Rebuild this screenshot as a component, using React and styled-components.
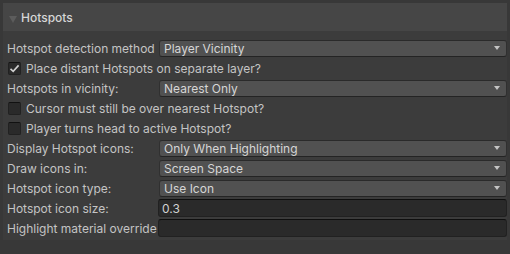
import React from "react";
import styled, { createGlobalStyle } from "styled-components";

const Global = createGlobalStyle`
  html, body { margin: 0; padding: 0; background: #383838; }
  body { font-family: Inter, "Noto Sans", sans-serif; font-size: 12px; color: #c4c4c4; }
  * { box-sizing: border-box; }
`;

const Page = styled.div`
  width: 510px;
  height: 254px;
  padding: 3px 3px 0 3px;
  background: #383838;
`;

const Header = styled.div`
  height: 28px;
  display: flex;
  align-items: center;
  gap: 4px;
  padding-left: 6px;
  background: #464646;
  color: #d6d6d6;
  font-size: 12px;
  font-weight: 500;
`;

const Foldout = styled.span`
  width: 0;
  height: 0;
  margin-top: 5px;
  border-left: 4px solid transparent;
  border-right: 4px solid transparent;
  border-top: 7px solid #5c5c5c;
`;

const Panel = styled.div`
  background: #3c3c3c;
  padding: 7px 0 2px 4px;
  display: flex;
  flex-direction: column;
`;

const Row = styled.div`
  height: 20px;
  display: flex;
  align-items: center;
`;

const Label = styled.div`
  width: 152px;
  flex: none;
  white-space: nowrap;
  overflow: hidden;
  color: #c4c4c4;
`;

const Dropdown = styled.div`
  flex: 1;
  height: 17px;
  display: flex;
  align-items: center;
  justify-content: space-between;
  padding: 0 6px 0 4px;
  background: #515151;
  border: 1px solid #303030;
  border-top-color: #2a2a2a;
  border-bottom-color: #242424;
  border-radius: 3px;
  color: #d6d6d6;
`;

const Arrow = styled.span`
  width: 0;
  height: 0;
  border-left: 3.5px solid transparent;
  border-right: 3.5px solid transparent;
  border-top: 4px solid #c4c4c4;
`;

const Field = styled.div`
  flex: 1;
  height: 18px;
  margin-left: -1px;
  display: flex;
  align-items: center;
  padding: 0 3px;
  background: #2a2a2a;
  border: 1px solid #212121;
  border-top-color: #0f0f0f;
  border-radius: 3px;
  color: #d2d2d2;
`;

const CheckRow = styled(Row)`
  gap: 5px;
`;

const Box = styled.span`
  width: 13px;
  height: 13px;
  margin-left: 1px;
  margin-top: 1px;
  border-radius: 2px;
  background: #2a2a2a;
  border: 1px solid #212121;
  border-top-color: #111;
  display: flex;
  align-items: center;
  justify-content: center;
`;

const Check = () => (
  <svg width="11" height="11" viewBox="0 0 11 11">
    <path d="M1.5 5.8 L4.2 8.4 L9.6 2.4" fill="none" stroke="#d0d0d0" strokeWidth="1.6" />
  </svg>
);

const Select = ({ label, value }) => (
  <Row>
    <Label>{label}</Label>
    <Dropdown>
      <span>{value}</span>
      <Arrow />
    </Dropdown>
  </Row>
);

const Toggle = ({ label, checked }) => (
  <CheckRow>
    <Box>{checked && <Check />}</Box>
    <span>{label}</span>
  </CheckRow>
);

const Input = ({ label, value }) => (
  <Row>
    <Label>{label}</Label>
    <Field>{value}</Field>
  </Row>
);

export default function App() {
  return (
    <Page>
      <Global />
      <Header>
        <Foldout />
        <span>Hotspots</span>
      </Header>
      <Panel>
        <Select label="Hotspot detection method" value="Player Vicinity" />
        <Toggle label="Place distant Hotspots on separate layer?" checked />
        <Select label="Hotspots in vicinity:" value="Nearest Only" />
        <Toggle label="Cursor must still be over nearest Hotspot?" />
        <Toggle label="Player turns head to active Hotspot?" />
        <Select label="Display Hotspot icons:" value="Only When Highlighting" />
        <Select label="Draw icons in:" value="Screen Space" />
        <Select label="Hotspot icon type:" value="Use Icon" />
        <Input label="Hotspot icon size:" value="0.3" />
        <Input label="Highlight material override" value="" />
      </Panel>
    </Page>
  );
}
